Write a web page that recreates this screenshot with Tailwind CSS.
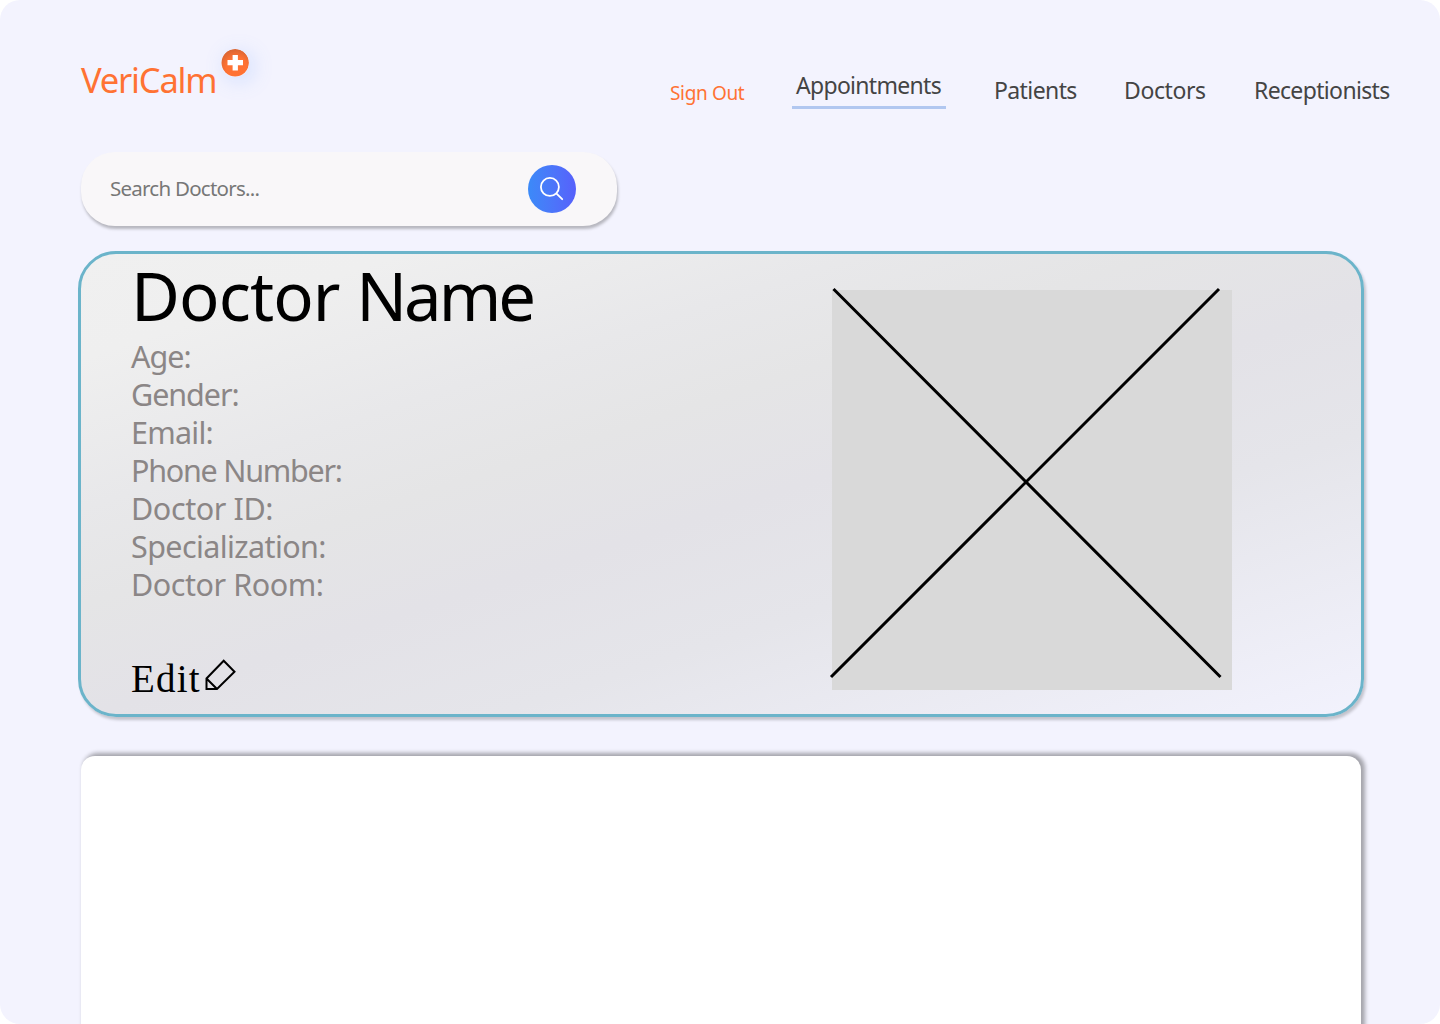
<!DOCTYPE html>
<html lang="en">
<head>
<meta charset="utf-8">
<title>VeriCalm</title>
<script src="https://cdn.jsdelivr.net/npm/@tailwindcss/browser@4"></script>
</head>
<body class="bg-white">
<div class="flex h-[1024px] w-[1440px] flex-col overflow-hidden rounded-[20px] bg-[#f3f3fe] pl-[78px] font-['Noto_Sans',sans-serif]">
  <header class="flex h-[152px] shrink-0 items-start justify-between pr-[50px] pl-[3px]">
    <div class="flex items-start pt-[49px]">
      <span class="mt-[7px] w-[140px] text-[34.5px] leading-[48px] tracking-[-1.2px] whitespace-nowrap text-[#ff7233]">VeriCalm</span>
      <svg class="size-7 rounded-full shadow-[4px_4px_20px_rgba(110,165,255,0.25)]" viewBox="0 0 28 28">
        <defs><radialGradient id="badge" cx=".55" cy=".68" r=".75"><stop offset=".5" stop-color="#ff7233"/><stop offset="1" stop-color="#cf6233"/></radialGradient></defs>
        <circle cx="14.2" cy="13.7" r="13.7" fill="url(#badge)"/>
        <path d="M11.6 6h5.3v5.1H22v5.2h-5.1v5.2h-5.3v-5.2H6.500v-5.2h5.1z" fill="#fff"/>
      </svg>
    </div>
    <nav class="flex items-start whitespace-nowrap pt-[70px] text-[23px] leading-8 text-[#444]">
      <a class="mt-[7px] mr-[47px] w-[75px] text-[19px] tracking-[-0.35px] text-[#ff7233]">Sign Out</a>
      <a class="mr-[48px] h-[39px] w-[154px] border-b-[3px] border-[#b1c7f0] pl-1 leading-[31px] tracking-[-0.7px]">Appointments</a>
      <a class="mt-1 w-[130px] tracking-[-0.6px]">Patients</a>
      <a class="mt-1 w-[130px] tracking-[-0.4px]">Doctors</a>
      <a class="mt-1 w-[136px] tracking-[-0.65px]">Receptionists</a>
    </nav>
  </header>

  <div class="ml-[3px] flex h-[74px] w-[536px] shrink-0 items-center justify-between rounded-[34px] bg-[#f9f7f9] pr-[41px] pl-[29px] shadow-[1px_3px_3px_rgba(0,0,0,0.25)]">
    <span class="-mt-[3px] text-[20.5px] leading-7 tracking-[-0.75px] text-[#777]">Search Doctors...</span>
    <button class="flex size-12 items-center justify-center rounded-full bg-linear-to-r from-[#3b8af8] to-[#5660fb]">
      <svg class="size-6" viewBox="0 0 24 24" fill="none" stroke="#fff" stroke-width="1.8" stroke-linecap="round"><circle cx="9.9" cy="9.9" r="9"/><path d="m16.8 16.8 5.4 5.4"/></svg>
    </button>
  </div>

  <main class="mt-[25px] flex h-[466px] w-[1286px] shrink-0 justify-between rounded-[38px] border-3 border-[#6bb4ca] bg-[linear-gradient(162deg,#f0f0f0_0%,#efefef_12%,#e8e8ea_29%,#e5e5e6_40%,#e3e2e7_53%,#e5e5ea_68%,#f2f2fd_100%)] pr-[129px] pl-[50px] shadow-[2px_3px_3px_rgba(0,0,0,0.2)]">
    <section class="flex flex-col whitespace-nowrap">
      <h1 class="h-[83px] text-[67px] leading-[82px] tracking-[-0.9px] text-black">Doctor <span class="tracking-[-3px]">Name</span></h1>
      <div class="text-[30.5px] leading-[38px] text-[#8b8686]">
        <p class="tracking-[-1px]">Age:</p>
        <p class="tracking-[-1.05px]">Gender:</p>
        <p class="tracking-[-0.75px]">Email:</p>
        <p class="tracking-[-1.25px]">Phone Number:</p>
        <p class="tracking-[-0.4px]">Doctor ID:</p>
        <p class="tracking-[-0.6px]">Specialization:</p>
        <p class="tracking-[-0.45px]">Doctor Room:</p>
      </div>
      <div class="mt-[52px] flex items-start">
        <span class="w-[74px] font-['Liberation_Serif',serif] text-[39px] leading-[47px] tracking-[1.2px] text-black">Edit</span>
        <svg class="mt-[3px] h-[32px] w-[31px]" viewBox="0 0 31 32" fill="none" stroke="#000" stroke-width="2"><path d="M1.500 20.5 18.700 2.8 29.500 13.8 12 31H1.500zM1.500 20.5 12 31"/></svg>
      </div>
    </section>
    <svg class="mt-9 size-[400px] overflow-visible" viewBox="0 0 400 400"><path fill="#d9d9d9" d="M0 0h400v400H0z"/><path d="m1.500-1 387 388M387-1-1 387" stroke="#000" stroke-width="3"/></svg>
  </main>

  <div class="mt-[39px] ml-[3px] h-[300px] w-[1280px] shrink-0 rounded-[14px] bg-white shadow-[3px_-2px_4px_1px_rgba(0,0,0,0.33)]"></div>
</div>
</body>
</html>
